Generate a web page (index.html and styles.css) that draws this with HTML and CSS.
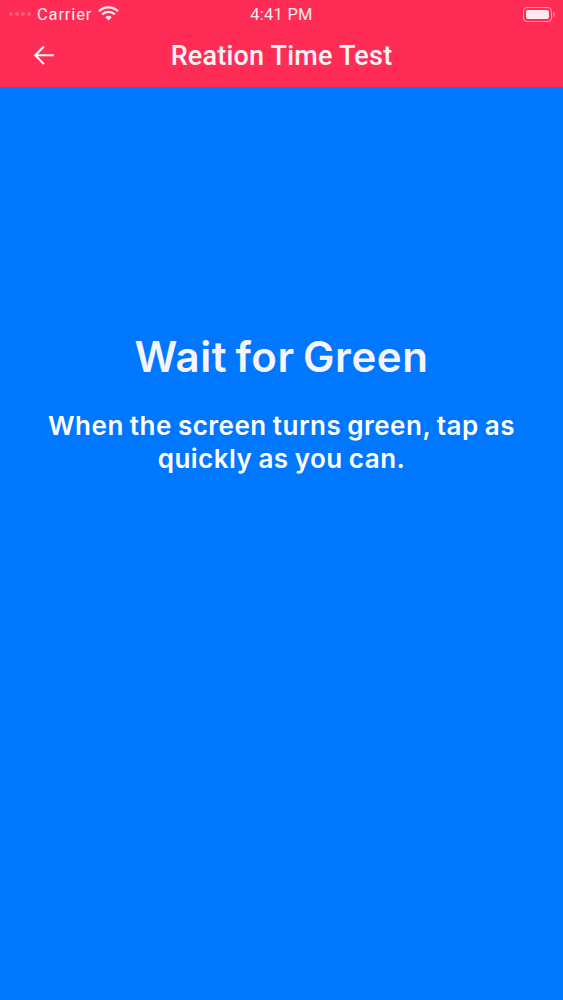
FILE: index.html
```html
<!DOCTYPE html>
<html lang="en">
<head>
<meta charset="utf-8">
<title>Reation Time Test</title>
<link rel="stylesheet" href="styles.css">
</head>
<body>
<div class="screen">
  <header class="top">
    <div class="status">
      <div class="status-left">
        <span class="signal"><i></i><i></i><i></i><i></i></span>
        <span class="carrier">Carrier</span>
        <svg class="wifi" width="21" height="15" viewBox="0 0 21 15"><path d="M1 5.2C6.4 0 14.6 0 20 5.2" fill="none" stroke="#fff" stroke-width="2.2"/><path d="M4.2 8.4C7.8 5 13.2 5 16.8 8.4" fill="none" stroke="#fff" stroke-width="2.2"/><path d="M7.3 11.2C9.2 9.4 11.8 9.4 13.7 11.2L10.5 14.6Z" fill="#fff"/></svg>
      </div>
      <span class="clock">4:41 PM</span>
      <div class="battery"><span class="battery-body"><span class="battery-fill"></span></span><span class="battery-cap"></span></div>
    </div>
    <div class="appbar">
      <svg class="back" width="24" height="24" viewBox="0 0 24 24"><path d="M22.5 12H2M11.6 2.2 1.9 12l9.7 9.8" transform="translate(1.5 1.5) scale(.9)" fill="none" stroke="#fff" stroke-width="2.3"/></svg>
      <h1 class="title">Reation Time Test</h1>
    </div>
  </header>
  <main class="content">
    <h2 class="heading">Wait for Green</h2>
    <p class="lead">When the screen turns green, tap as quickly as you can.</p>
  </main>
</div>
</body>
</html>
```
FILE: styles.css
```css
* { box-sizing: border-box; }
html, body { margin: 0; padding: 0; }
.screen { width: 563px; height: 1000px; display: flex; flex-direction: column; background: #0077ff; color: #fff; overflow: hidden; }
.top { height: 87px; background: #ff2d55; flex: none; display: flex; flex-direction: column; }
.status { height: 28px; display: flex; align-items: center; justify-content: space-between; position: relative; font-family: Roboto, "Liberation Sans", sans-serif; font-size: 16.5px; letter-spacing: .25px; color: #fff; opacity: .9; padding: 0 8px 0 9px; }
.status-left { display: flex; align-items: center; }
.signal { display: flex; gap: 2px; margin-right: 6px; opacity: .25; }
.signal i { width: 4px; height: 4px; border-radius: 50%; background: #fff; }
.carrier { margin-right: 6px; letter-spacing: .85px; }
.wifi { display: block; margin-bottom: 2px; }
.clock { position: absolute; left: 0; right: 0; text-align: center; }
.battery { display: flex; align-items: center; }
.battery-body { width: 29px; height: 15px; border: 1px solid rgba(255, 255, 255, .6); border-radius: 4px; padding: 2px; display: block; }
.battery-fill { display: block; height: 100%; background: #fff; border-radius: 2px; }
.battery-cap { width: 2px; height: 5px; background: #fff; opacity: .4; margin-left: 1px; border-radius: 0 2px 2px 0; }
.appbar { flex: 1; display: flex; align-items: center; position: relative; padding: 0 0 5px 32px; }
.back { display: block; }
.title { position: absolute; left: 0; right: 0; top: 9px; margin: 0; text-align: center; font-family: Roboto, "Liberation Sans", sans-serif; font-weight: 500; font-size: 27px; line-height: 38px; letter-spacing: .2px; color: #fdf3f5; }
.content { flex: 1; display: flex; flex-direction: column; align-items: center; padding: 245px 40px 0; text-align: center; font-family: Inter, "Noto Sans", sans-serif; }
.heading { margin: 0; font-size: 42px; line-height: 50px; font-weight: 600; letter-spacing: .6px; word-spacing: -3px; color: #f6f4fd; }
.lead { margin: 27px 0 0; font-size: 26px; line-height: 33px; font-weight: 600; letter-spacing: .5px; word-spacing: -1px; }
```
